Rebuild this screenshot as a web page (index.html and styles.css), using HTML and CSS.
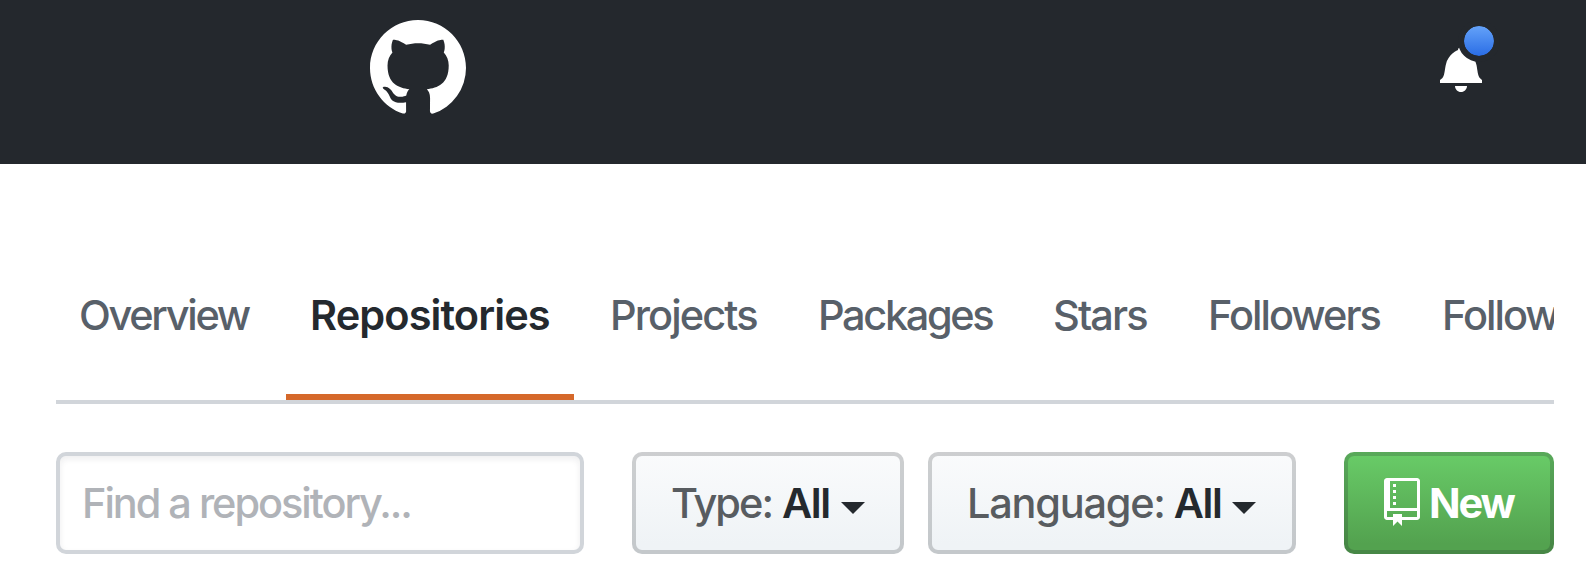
FILE: index.html
```html
<!DOCTYPE html>
<html lang="en">
<head>
<meta charset="utf-8">
<title>Repositories</title>
<link rel="stylesheet" href="styles.css">
</head>
<body>
<header class="header">
  <a class="logo" aria-label="Homepage">
    <svg width="96" height="96" viewBox="0 0 16 16"><path fill-rule="evenodd" d="M8 0C3.58 0 0 3.58 0 8c0 3.54 2.29 6.53 5.47 7.59.4.07.55-.17.55-.38 0-.19-.01-.82-.01-1.49-2.01.37-2.53-.49-2.69-.94-.09-.23-.48-.94-.82-1.13-.28-.15-.68-.52-.01-.53.63-.01 1.08.58 1.23.82.72 1.21 1.87.87 2.33.66.07-.52.28-.87.51-1.07-1.78-.2-3.64-.89-3.64-3.95 0-.87.31-1.59.82-2.15-.08-.2-.36-1.02.08-2.12 0 0 .67-.21 2.2.82.64-.18 1.32-.27 2-.27.68 0 1.36.09 2 .27 1.53-1.04 2.2-.82 2.2-.82.44 1.1.16 1.92.08 2.12.51.56.82 1.27.82 2.15 0 3.07-1.87 3.75-3.65 3.95.29.25.54.73.54 1.48 0 1.07-.01 1.93-.01 2.2 0 .21.15.46.55.38A8.013 8.013 0 0 0 16 8c0-4.42-3.58-8-8-8z"/></svg>
  </a>
  <a class="bell" aria-label="Notifications">
    <span class="unread"></span>
    <svg width="42" height="48" viewBox="0 0 14 16"><path fill-rule="evenodd" d="M14 12v1H0v-1l.73-.58c.77-.77.81-2.55 1.19-4.42C2.69 3.23 6 2 6 2c0-.55.45-1 1-1s1 .45 1 1c0 0 3.39 1.23 4.16 5 .38 1.88.42 3.66 1.19 4.42l.66.58H14zm-7 4c1.11 0 2-.89 2-2H5c0 1.11.89 2 2 2z"/></svg>
  </a>
</header>
<main class="content">
  <nav class="tabs">
    <a class="tab t-overview">Overview</a>
    <a class="tab t-repositories selected">Repositories</a>
    <a class="tab t-projects">Projects</a>
    <a class="tab t-packages">Packages</a>
    <a class="tab t-stars">Stars</a>
    <a class="tab t-followers">Followers</a>
    <a class="tab t-following">Following</a>
  </nav>
  <div class="filters">
    <input class="search" type="text" placeholder="Find a repository..." aria-label="Find a repository">
    <button class="btn type"><span class="label">Type:</span><span class="value">All</span><span class="caret"></span></button>
    <button class="btn language"><span class="label">Language:</span><span class="value">All</span><span class="caret"></span></button>
    <button class="btn primary"><svg class="repo" width="36" height="48" viewBox="0 0 12 16"><path fill-rule="evenodd" d="M4 9H3V8h1v1zm0-3H3v1h1V6zm0-2H3v1h1V4zm0-2H3v1h1V2zm8-1v12c0 .55-.45 1-1 1H6v2l-1.500-1.500L3 16v-2H1c-.55 0-1-.45-1-1V1c0-.55.45-1 1-1h10c.55 0 1 .45 1 1zm-1 10H1v2h2v-1h3v1h5v-2zm0-10H2v9h9V1z"/></svg><span class="new">New</span></button>
  </div>
</main>
</body>
</html>
```
FILE: styles.css
```css
* { box-sizing: border-box; }
body {
  margin: 0;
  height: 588px;
  overflow: hidden;
  background: #fff;
  color: #24292e;
  font-family: Inter, "Liberation Sans", sans-serif;
  font-size: 41.5px;
}
svg { display: block; fill: currentColor; }

.header {
  height: 164px;
  padding: 20px 104px 0 370px;
  display: flex;
  justify-content: space-between;
  align-items: flex-start;
  background: #24282d;
  color: #fff;
}
.bell { position: relative; margin-top: 24px; }
.unread {
  position: absolute;
  top: -24px;
  left: 18px;
  width: 42px;
  height: 42px;
  border: 6px solid #24282d;
  border-radius: 50%;
  background: linear-gradient(#64a2f9, #2a6de5) padding-box;
}

.content { padding: 100px 32px 0 56px; }
.tabs {
  display: flex;
  gap: 12px;
  height: 140px;
  overflow: hidden;
  border-bottom: 4px solid #d1d5da;
}
.tab {
  flex: none;
  height: 136px;
  padding: 26px 0 0 24px;
  line-height: 50px;
  white-space: nowrap;
  color: #586069;
  font-weight: 450;
}
.selected {
  border-bottom: 6px solid #d5682a;
  color: #24292e;
  font-weight: 600;
}
.t-overview { width: 218px; padding-left: 23px; letter-spacing: -2.3px; }
.t-repositories { width: 288px; letter-spacing: -.9px; }
.t-projects { width: 195px; letter-spacing: -1.9px; }
.t-packages { width: 224px; padding-left: 25px; letter-spacing: -2.35px; }
.t-stars { width: 141px; letter-spacing: -1.9px; }
.t-followers { width: 222px; padding-left: 26px; letter-spacing: -2px; }
.t-following { padding-left: 26px; letter-spacing: -2px; }

.filters { display: flex; margin-top: 48px; height: 102px; }
.search {
  width: 528px;
  margin-right: 48px;
  padding: 0 22px;
  border: 4px solid #d1d5da;
  border-radius: 10px;
  background: #fff;
  box-shadow: inset 0 3px 6px rgba(27, 31, 35, .075);
  font: inherit;
  font-weight: 450;
  letter-spacing: -2.05px;
}
.search::placeholder { color: #b0b3b8; opacity: 1; }
.btn {
  display: flex;
  align-items: center;
  margin: 0;
  padding: 0 0 0 35px;
  border: 4px solid rgba(27, 31, 35, .2);
  border-radius: 10px;
  background: linear-gradient(#fafbfc, #eff3f6 90%) border-box;
  color: #24292e;
  font: inherit;
  font-weight: 600;
  letter-spacing: -1.4px;
}
.type { width: 272px; margin-right: 24px; }
.language { width: 368px; margin-right: 48px; }
.label { color: #585c60; font-weight: 500; }
.type .label { letter-spacing: -2px; }
.language .label { letter-spacing: -1.25px; }
.value { margin-left: 10px; }
.language .value { margin-left: 9px; }
.caret {
  margin: 10px 0 0 11px;
  border: 12px solid transparent;
  border-top-color: #24292e;
  border-bottom: 0;
}
.primary {
  width: 210px;
  padding-left: 36px;
  background: linear-gradient(#69cc68, #53a24f 90%) border-box;
  color: #fff;
}
.repo { margin-bottom: 2px; }
.new { margin-left: 9px; font-weight: 700; letter-spacing: -2.2px; }
```
